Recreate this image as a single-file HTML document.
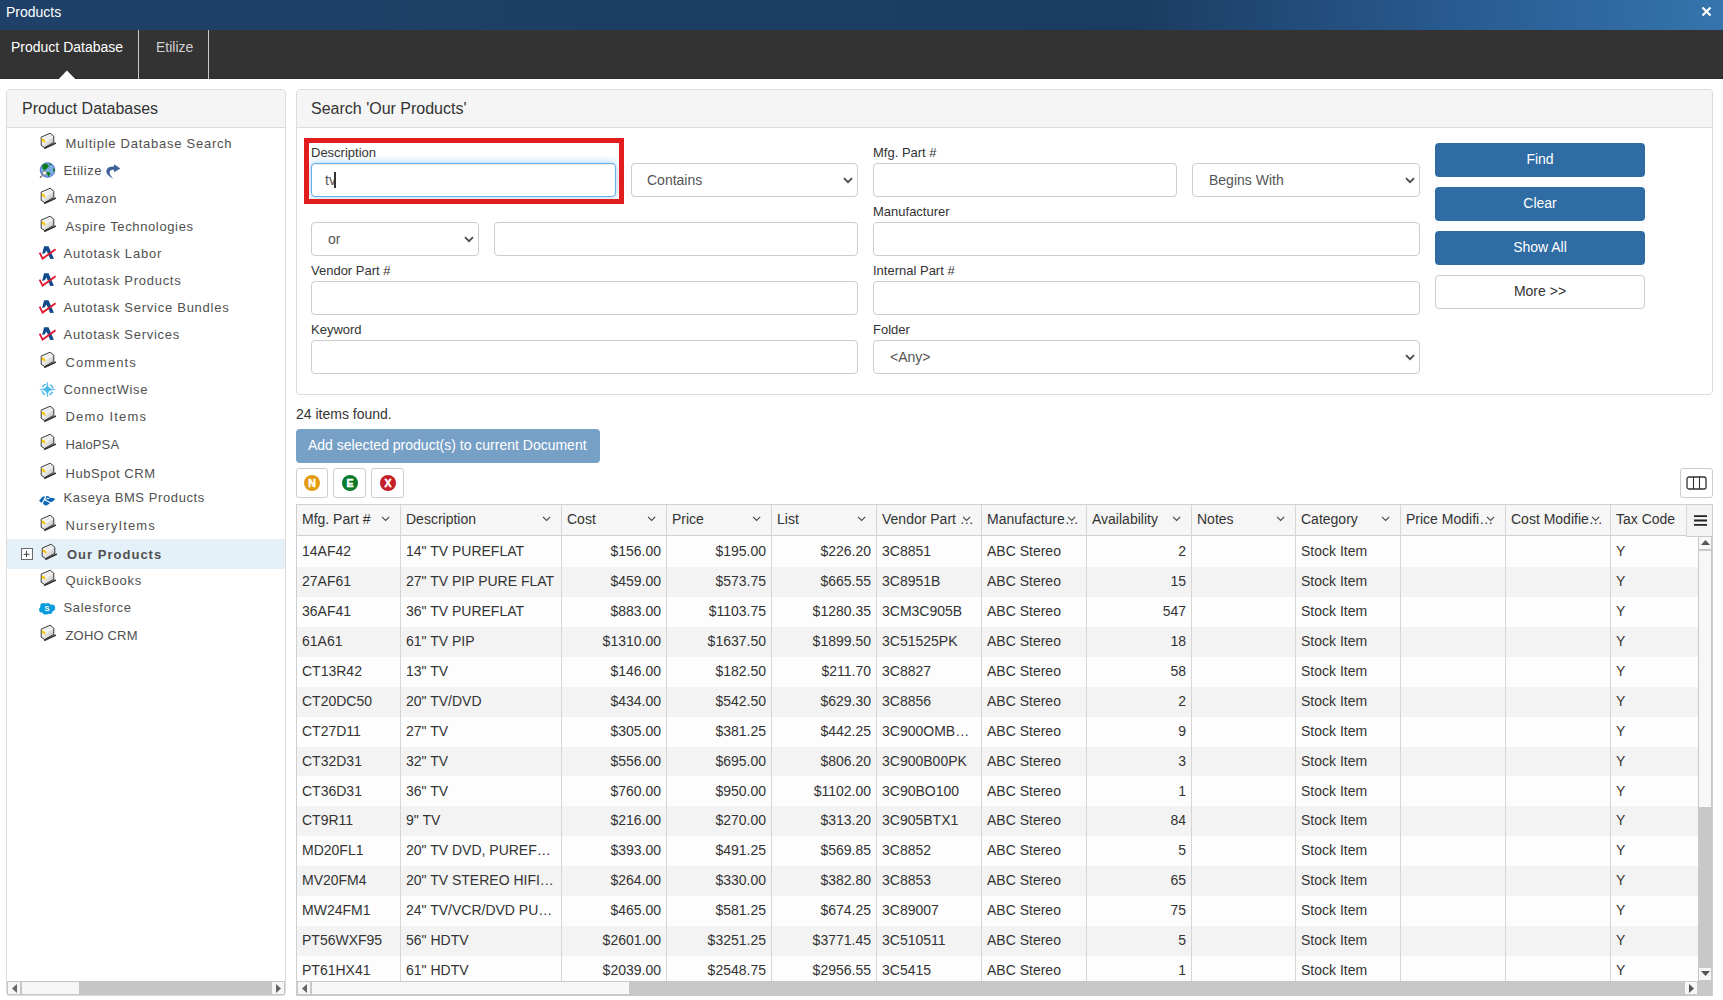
<!DOCTYPE html>
<html><head><meta charset="utf-8"><title>Products</title>
<style>
html,body{margin:0;padding:0;}
body{width:1723px;height:1000px;position:relative;overflow:hidden;background:#fff;font-family:"Liberation Sans", sans-serif;}
.t{position:absolute;white-space:nowrap;font-family:"Liberation Sans", sans-serif;}
.b{position:absolute;}
svg{display:block;}
</style></head><body>
<div class="b" style="left:0px;top:0px;width:1723px;height:30px;background:linear-gradient(90deg,#1f4169 0%,#1b3c62 66%,#285a8f 84%,#3574ad 100%)"></div><div class="t" style="left:6px;top:4.15px;font-size:14px;line-height:16px;color:#fff;">Products</div><svg class="b" style="left:1701px;top:6px" width="11" height="11" viewBox="0 0 11 11"><path d="M1.5 1.5L9.5 9.5M9.5 1.5L1.5 9.5" stroke="#fff" stroke-width="2.2"/></svg><div class="b" style="left:0px;top:30px;width:1723px;height:49px;background:#333;border-bottom:1px solid #2a2a2a;box-sizing:border-box"></div><div class="b" style="left:138px;top:30px;width:1px;height:49px;background:#c8c8c8"></div><div class="b" style="left:208px;top:30px;width:1px;height:49px;background:#c8c8c8"></div><div class="t" style="left:11px;top:39.15px;font-size:14px;line-height:16px;color:#fff;">Product Database</div><div class="t" style="left:156px;top:39.15px;font-size:14px;line-height:16px;color:#cfcfcf;">Etilize</div><svg class="b" style="left:58px;top:70px" width="18" height="9" viewBox="0 0 18 9"><path d="M0.8 9L8.9 0.6L17.2 9Z" fill="#fff"/></svg><div class="b" style="left:6px;top:89px;width:280px;height:907px;border:1px solid #dcdcdc;border-radius:4px;box-sizing:border-box;background:#fff"></div><div class="b" style="left:7px;top:90px;width:278px;height:37px;background:#f5f5f5;border-bottom:1px solid #dcdcdc;border-radius:3px 3px 0 0"></div><div class="t" style="left:22px;top:100.46px;font-size:16px;line-height:18px;color:#333;">Product Databases</div><div class="b" style="left:7px;top:539px;width:278px;height:30px;background:#e5f1f8"></div><svg class="b" style="left:21px;top:548px" width="12" height="12" viewBox="0 0 12 12"><rect x="0.5" y="0.5" width="11" height="11" fill="#fbfdfe" stroke="#6a6a6a"/><path d="M2.5 6.3H8.5M5.5 3V9" stroke="#444" stroke-width="1"/></svg><svg class="b" style="left:36px;top:128px" width="24" height="24" viewBox="36 128 24 24"><defs><linearGradient id="dbg1" x1="0" y1="0" x2="1" y2="1"><stop offset="0" stop-color="#ffffff"/><stop offset="0.5" stop-color="#e8e8e8"/><stop offset="1" stop-color="#b0b0b0"/></linearGradient></defs>
<path d="M41.2 137.1 L50.2 133.2 L53.8 136.2 L53.8 142.4 L44.6 147.6 L41.2 145.3 Z" fill="url(#dbg1)" stroke="#3a3a3a" stroke-width="1"/>
<path d="M42 138 L45.6 140 L53 136.3" fill="none" stroke="#fff" stroke-width="0.9"/>
<path d="M44.2 148.4 L55.9 142.9" stroke="#333" stroke-width="1.7"/>
<path d="M41.8 138.2 L44.6 139.4 L45.8 142.6 L44.8 142.4 L41.8 140.8 Z" fill="#f8c400"/></svg><div class="t" style="left:65.5px;top:136.00px;font-size:13px;line-height:15px;color:#505050;letter-spacing:0.745px;">Multiple Database Search</div><svg class="b" style="left:34px;top:158px" width="28" height="24" viewBox="34 158 28 24"><circle cx="47.5" cy="170" r="7.3" fill="#78ace2" stroke="#4a5fd6" stroke-width="0.9"/>
<path d="M41.9 165.2 L45.5 163.3 L48.2 164.7 L48.9 166.4 L47 168.3 L44.6 170.5 L42.6 168.8 Z" fill="#0d7a1c"/>
<path d="M49.1 163.5 L51.8 164.2 L51.3 165.2 L49.6 165 Z" fill="#0d7a1c"/>
<path d="M53.7 168.1 L54.9 169.3 L54.6 171.4 L53.2 171.4 L53 169.5 Z" fill="#0d7a1c"/>
<path d="M47.4 171.7 L49.4 172.4 L50.8 173.6 L49.4 175.3 L48.4 177.2 L47.7 175.3 L47 173.4 Z" fill="#0d7a1c"/>
<path d="M41.9 175.8 L40 177.6" stroke="#6a5a4a" stroke-width="1.3"/>
<circle cx="44.6" cy="173.1" r="2" fill="#fff" stroke="#7a6a5a" stroke-width="0.8"/></svg><div class="t" style="left:63.5px;top:163.00px;font-size:13px;line-height:15px;color:#505050;letter-spacing:0.547px;">Etilize</div><svg class="b" style="left:100px;top:158px" width="26" height="24" viewBox="100 158 26 24"><path d="M113.5 178.8 Q106 175 106.3 171 Q107 166.5 114 166.6 L114 164.3 L120.4 168.5 L114 172.2 L114 169.9 Q110 169.6 109.6 172.2 Q109.6 175.2 113.5 178.8 Z" fill="#3e6198"/></svg><svg class="b" style="left:36px;top:183px" width="24" height="24" viewBox="36 128 24 24"><defs><linearGradient id="dbg4" x1="0" y1="0" x2="1" y2="1"><stop offset="0" stop-color="#ffffff"/><stop offset="0.5" stop-color="#e8e8e8"/><stop offset="1" stop-color="#b0b0b0"/></linearGradient></defs>
<path d="M41.2 137.1 L50.2 133.2 L53.8 136.2 L53.8 142.4 L44.6 147.6 L41.2 145.3 Z" fill="url(#dbg4)" stroke="#3a3a3a" stroke-width="1"/>
<path d="M42 138 L45.6 140 L53 136.3" fill="none" stroke="#fff" stroke-width="0.9"/>
<path d="M44.2 148.4 L55.9 142.9" stroke="#333" stroke-width="1.7"/>
<path d="M41.8 138.2 L44.6 139.4 L45.8 142.6 L44.8 142.4 L41.8 140.8 Z" fill="#f8c400"/></svg><div class="t" style="left:65.5px;top:191.00px;font-size:13px;line-height:15px;color:#505050;letter-spacing:0.66px;">Amazon</div><svg class="b" style="left:36px;top:211px" width="24" height="24" viewBox="36 128 24 24"><defs><linearGradient id="dbg5" x1="0" y1="0" x2="1" y2="1"><stop offset="0" stop-color="#ffffff"/><stop offset="0.5" stop-color="#e8e8e8"/><stop offset="1" stop-color="#b0b0b0"/></linearGradient></defs>
<path d="M41.2 137.1 L50.2 133.2 L53.8 136.2 L53.8 142.4 L44.6 147.6 L41.2 145.3 Z" fill="url(#dbg5)" stroke="#3a3a3a" stroke-width="1"/>
<path d="M42 138 L45.6 140 L53 136.3" fill="none" stroke="#fff" stroke-width="0.9"/>
<path d="M44.2 148.4 L55.9 142.9" stroke="#333" stroke-width="1.7"/>
<path d="M41.8 138.2 L44.6 139.4 L45.8 142.6 L44.8 142.4 L41.8 140.8 Z" fill="#f8c400"/></svg><div class="t" style="left:65.5px;top:219.00px;font-size:13px;line-height:15px;color:#505050;letter-spacing:0.633px;">Aspire Technologies</div><svg class="b" style="left:34px;top:242px" width="26" height="22" viewBox="34 242 26 22"><path d="M44.1 246.2 L48.5 246.2 L53.9 258.8 L50.3 258.9 L46.4 250.4 L44.8 253.2 L42.1 254 Z" fill="#0f4a8a"/>
<path d="M39.6 252.6 L42.6 258.6 L55.6 249.3" fill="none" stroke="#e3162f" stroke-width="1.8" stroke-linejoin="miter"/></svg><div class="t" style="left:63.5px;top:246.00px;font-size:13px;line-height:15px;color:#505050;letter-spacing:0.797px;">Autotask Labor</div><svg class="b" style="left:34px;top:269px" width="26" height="22" viewBox="34 242 26 22"><path d="M44.1 246.2 L48.5 246.2 L53.9 258.8 L50.3 258.9 L46.4 250.4 L44.8 253.2 L42.1 254 Z" fill="#0f4a8a"/>
<path d="M39.6 252.6 L42.6 258.6 L55.6 249.3" fill="none" stroke="#e3162f" stroke-width="1.8" stroke-linejoin="miter"/></svg><div class="t" style="left:63.5px;top:273.00px;font-size:13px;line-height:15px;color:#505050;letter-spacing:0.732px;">Autotask Products</div><svg class="b" style="left:34px;top:296px" width="26" height="22" viewBox="34 242 26 22"><path d="M44.1 246.2 L48.5 246.2 L53.9 258.8 L50.3 258.9 L46.4 250.4 L44.8 253.2 L42.1 254 Z" fill="#0f4a8a"/>
<path d="M39.6 252.6 L42.6 258.6 L55.6 249.3" fill="none" stroke="#e3162f" stroke-width="1.8" stroke-linejoin="miter"/></svg><div class="t" style="left:63.5px;top:300.00px;font-size:13px;line-height:15px;color:#505050;letter-spacing:0.739px;">Autotask Service Bundles</div><svg class="b" style="left:34px;top:323px" width="26" height="22" viewBox="34 242 26 22"><path d="M44.1 246.2 L48.5 246.2 L53.9 258.8 L50.3 258.9 L46.4 250.4 L44.8 253.2 L42.1 254 Z" fill="#0f4a8a"/>
<path d="M39.6 252.6 L42.6 258.6 L55.6 249.3" fill="none" stroke="#e3162f" stroke-width="1.8" stroke-linejoin="miter"/></svg><div class="t" style="left:63.5px;top:327.00px;font-size:13px;line-height:15px;color:#505050;letter-spacing:0.73px;">Autotask Services</div><svg class="b" style="left:36px;top:347px" width="24" height="24" viewBox="36 128 24 24"><defs><linearGradient id="dbg10" x1="0" y1="0" x2="1" y2="1"><stop offset="0" stop-color="#ffffff"/><stop offset="0.5" stop-color="#e8e8e8"/><stop offset="1" stop-color="#b0b0b0"/></linearGradient></defs>
<path d="M41.2 137.1 L50.2 133.2 L53.8 136.2 L53.8 142.4 L44.6 147.6 L41.2 145.3 Z" fill="url(#dbg10)" stroke="#3a3a3a" stroke-width="1"/>
<path d="M42 138 L45.6 140 L53 136.3" fill="none" stroke="#fff" stroke-width="0.9"/>
<path d="M44.2 148.4 L55.9 142.9" stroke="#333" stroke-width="1.7"/>
<path d="M41.8 138.2 L44.6 139.4 L45.8 142.6 L44.8 142.4 L41.8 140.8 Z" fill="#f8c400"/></svg><div class="t" style="left:65.5px;top:355.00px;font-size:13px;line-height:15px;color:#505050;letter-spacing:1.043px;">Comments</div><svg class="b" style="left:34px;top:378px" width="26" height="24" viewBox="34 378 26 24"><circle cx="47.4" cy="389.5" r="5.6" fill="none" stroke="#4ab8e8" stroke-width="1.5" stroke-dasharray="4.3 4.5" stroke-dashoffset="-2.25"/>
<path d="M47.4 382 C47.7 387.4 48.6 389.1 55 389.5 C48.6 389.9 47.7 391.6 47.4 397 C47.1 391.6 46.2 389.9 39.8 389.5 C46.2 389.1 47.1 387.4 47.4 382 Z" fill="#4ab8e8" stroke="#4ab8e8" stroke-width="0.6"/></svg><div class="t" style="left:63.5px;top:382.00px;font-size:13px;line-height:15px;color:#505050;letter-spacing:0.67px;">ConnectWise</div><svg class="b" style="left:36px;top:401px" width="24" height="24" viewBox="36 128 24 24"><defs><linearGradient id="dbg12" x1="0" y1="0" x2="1" y2="1"><stop offset="0" stop-color="#ffffff"/><stop offset="0.5" stop-color="#e8e8e8"/><stop offset="1" stop-color="#b0b0b0"/></linearGradient></defs>
<path d="M41.2 137.1 L50.2 133.2 L53.8 136.2 L53.8 142.4 L44.6 147.6 L41.2 145.3 Z" fill="url(#dbg12)" stroke="#3a3a3a" stroke-width="1"/>
<path d="M42 138 L45.6 140 L53 136.3" fill="none" stroke="#fff" stroke-width="0.9"/>
<path d="M44.2 148.4 L55.9 142.9" stroke="#333" stroke-width="1.7"/>
<path d="M41.8 138.2 L44.6 139.4 L45.8 142.6 L44.8 142.4 L41.8 140.8 Z" fill="#f8c400"/></svg><div class="t" style="left:65.5px;top:409.00px;font-size:13px;line-height:15px;color:#505050;letter-spacing:1.151px;">Demo Items</div><svg class="b" style="left:36px;top:429px" width="24" height="24" viewBox="36 128 24 24"><defs><linearGradient id="dbg13" x1="0" y1="0" x2="1" y2="1"><stop offset="0" stop-color="#ffffff"/><stop offset="0.5" stop-color="#e8e8e8"/><stop offset="1" stop-color="#b0b0b0"/></linearGradient></defs>
<path d="M41.2 137.1 L50.2 133.2 L53.8 136.2 L53.8 142.4 L44.6 147.6 L41.2 145.3 Z" fill="url(#dbg13)" stroke="#3a3a3a" stroke-width="1"/>
<path d="M42 138 L45.6 140 L53 136.3" fill="none" stroke="#fff" stroke-width="0.9"/>
<path d="M44.2 148.4 L55.9 142.9" stroke="#333" stroke-width="1.7"/>
<path d="M41.8 138.2 L44.6 139.4 L45.8 142.6 L44.8 142.4 L41.8 140.8 Z" fill="#f8c400"/></svg><div class="t" style="left:65.5px;top:437.00px;font-size:13px;line-height:15px;color:#505050;letter-spacing:0.14px;">HaloPSA</div><svg class="b" style="left:36px;top:458px" width="24" height="24" viewBox="36 128 24 24"><defs><linearGradient id="dbg14" x1="0" y1="0" x2="1" y2="1"><stop offset="0" stop-color="#ffffff"/><stop offset="0.5" stop-color="#e8e8e8"/><stop offset="1" stop-color="#b0b0b0"/></linearGradient></defs>
<path d="M41.2 137.1 L50.2 133.2 L53.8 136.2 L53.8 142.4 L44.6 147.6 L41.2 145.3 Z" fill="url(#dbg14)" stroke="#3a3a3a" stroke-width="1"/>
<path d="M42 138 L45.6 140 L53 136.3" fill="none" stroke="#fff" stroke-width="0.9"/>
<path d="M44.2 148.4 L55.9 142.9" stroke="#333" stroke-width="1.7"/>
<path d="M41.8 138.2 L44.6 139.4 L45.8 142.6 L44.8 142.4 L41.8 140.8 Z" fill="#f8c400"/></svg><div class="t" style="left:65.5px;top:466.00px;font-size:13px;line-height:15px;color:#505050;letter-spacing:0.58px;">HubSpot CRM</div><svg class="b" style="left:36px;top:490px" width="24" height="20" viewBox="36 490 24 20"><path d="M39.2 500.4 L42 497.2 L44.4 496 L44.8 496.8 L43.6 499.4 L42.6 501.6 L41.4 502.8 L40 501.8 Z" fill="#1068b8"/>
<path d="M46.2 496 L48.6 496.2 L49.8 497.8 L54.6 498.2 L54.8 499.4 L53.2 501 L51.4 502.2 L49 501.4 L47.2 500.4 L45.2 498.6 L46 497.8 Z" fill="#1068b8"/>
<ellipse cx="47.9" cy="498.4" rx="1.4" ry="0.6" fill="#fff"/>
<path d="M44.4 500.2 L46.8 501.6 L48.8 502.6 L50 503.6 L48 504.6 L46.4 505.8 L44 504.8 L43 503.6 L43.6 502 Z" fill="#1068b8"/></svg><div class="t" style="left:63.5px;top:490.00px;font-size:13px;line-height:15px;color:#505050;letter-spacing:0.594px;">Kaseya BMS Products</div><svg class="b" style="left:36px;top:510px" width="24" height="24" viewBox="36 128 24 24"><defs><linearGradient id="dbg16" x1="0" y1="0" x2="1" y2="1"><stop offset="0" stop-color="#ffffff"/><stop offset="0.5" stop-color="#e8e8e8"/><stop offset="1" stop-color="#b0b0b0"/></linearGradient></defs>
<path d="M41.2 137.1 L50.2 133.2 L53.8 136.2 L53.8 142.4 L44.6 147.6 L41.2 145.3 Z" fill="url(#dbg16)" stroke="#3a3a3a" stroke-width="1"/>
<path d="M42 138 L45.6 140 L53 136.3" fill="none" stroke="#fff" stroke-width="0.9"/>
<path d="M44.2 148.4 L55.9 142.9" stroke="#333" stroke-width="1.7"/>
<path d="M41.8 138.2 L44.6 139.4 L45.8 142.6 L44.8 142.4 L41.8 140.8 Z" fill="#f8c400"/></svg><div class="t" style="left:65.5px;top:518.00px;font-size:13px;line-height:15px;color:#505050;letter-spacing:1.084px;">NurseryItems</div><svg class="b" style="left:37px;top:539px" width="24" height="24" viewBox="36 128 24 24"><defs><linearGradient id="dbg17" x1="0" y1="0" x2="1" y2="1"><stop offset="0" stop-color="#ffffff"/><stop offset="0.5" stop-color="#e8e8e8"/><stop offset="1" stop-color="#b0b0b0"/></linearGradient></defs>
<path d="M41.2 137.1 L50.2 133.2 L53.8 136.2 L53.8 142.4 L44.6 147.6 L41.2 145.3 Z" fill="url(#dbg17)" stroke="#3a3a3a" stroke-width="1"/>
<path d="M42 138 L45.6 140 L53 136.3" fill="none" stroke="#fff" stroke-width="0.9"/>
<path d="M44.2 148.4 L55.9 142.9" stroke="#333" stroke-width="1.7"/>
<path d="M41.8 138.2 L44.6 139.4 L45.8 142.6 L44.8 142.4 L41.8 140.8 Z" fill="#f8c400"/></svg><div class="t" style="left:67.0px;top:547.00px;font-size:13px;line-height:15px;color:#505050;letter-spacing:1.011px;font-weight:bold;">Our Products</div><svg class="b" style="left:36px;top:565px" width="24" height="24" viewBox="36 128 24 24"><defs><linearGradient id="dbg18" x1="0" y1="0" x2="1" y2="1"><stop offset="0" stop-color="#ffffff"/><stop offset="0.5" stop-color="#e8e8e8"/><stop offset="1" stop-color="#b0b0b0"/></linearGradient></defs>
<path d="M41.2 137.1 L50.2 133.2 L53.8 136.2 L53.8 142.4 L44.6 147.6 L41.2 145.3 Z" fill="url(#dbg18)" stroke="#3a3a3a" stroke-width="1"/>
<path d="M42 138 L45.6 140 L53 136.3" fill="none" stroke="#fff" stroke-width="0.9"/>
<path d="M44.2 148.4 L55.9 142.9" stroke="#333" stroke-width="1.7"/>
<path d="M41.8 138.2 L44.6 139.4 L45.8 142.6 L44.8 142.4 L41.8 140.8 Z" fill="#f8c400"/></svg><div class="t" style="left:65.5px;top:573.00px;font-size:13px;line-height:15px;color:#505050;letter-spacing:0.709px;">QuickBooks</div><svg class="b" style="left:34px;top:596px" width="26" height="24" viewBox="34 596 26 24"><g fill="#0a9ddd"><circle cx="43.5" cy="606.2" r="3.2"/><circle cx="47.8" cy="605.5" r="2.6"/><circle cx="51.8" cy="607.9" r="3.3"/><circle cx="41.9" cy="609.8" r="2.8"/><circle cx="45.6" cy="611.4" r="3.2"/><circle cx="49.6" cy="610.9" r="3"/><rect x="42" y="606" width="10" height="6"/></g>
<text x="47.1" y="611.3" font-family="Liberation Sans" font-size="7.5" font-weight="bold" fill="#fff" text-anchor="middle">S</text></svg><div class="t" style="left:63.5px;top:600.00px;font-size:13px;line-height:15px;color:#505050;letter-spacing:0.667px;">Salesforce</div><svg class="b" style="left:36px;top:620px" width="24" height="24" viewBox="36 128 24 24"><defs><linearGradient id="dbg20" x1="0" y1="0" x2="1" y2="1"><stop offset="0" stop-color="#ffffff"/><stop offset="0.5" stop-color="#e8e8e8"/><stop offset="1" stop-color="#b0b0b0"/></linearGradient></defs>
<path d="M41.2 137.1 L50.2 133.2 L53.8 136.2 L53.8 142.4 L44.6 147.6 L41.2 145.3 Z" fill="url(#dbg20)" stroke="#3a3a3a" stroke-width="1"/>
<path d="M42 138 L45.6 140 L53 136.3" fill="none" stroke="#fff" stroke-width="0.9"/>
<path d="M44.2 148.4 L55.9 142.9" stroke="#333" stroke-width="1.7"/>
<path d="M41.8 138.2 L44.6 139.4 L45.8 142.6 L44.8 142.4 L41.8 140.8 Z" fill="#f8c400"/></svg><div class="t" style="left:65.5px;top:628.00px;font-size:13px;line-height:15px;color:#505050;letter-spacing:0.177px;">ZOHO CRM</div><div class="b" style="left:7px;top:981px;width:278px;height:14px;background:#c6c6c6"></div><div class="b" style="left:8px;top:982px;width:12px;height:12px;background:#f6f6f6"></div><div class="b" style="left:22px;top:982px;width:57px;height:12px;background:#f6f6f6"></div><div class="b" style="left:272px;top:982px;width:12px;height:12px;background:#f6f6f6"></div><svg class="b" style="left:12px;top:984px" width="5" height="9"><path d="M5 0L0 4.5L5 9Z" fill="#666"/></svg><svg class="b" style="left:276px;top:984px" width="5" height="9"><path d="M0 0L5 4.5L0 9Z" fill="#666"/></svg><div class="b" style="left:296px;top:89px;width:1417px;height:306px;border:1px solid #dcdcdc;border-radius:4px;box-sizing:border-box;background:#fff"></div><div class="b" style="left:297px;top:90px;width:1415px;height:37px;background:#f5f5f5;border-bottom:1px solid #dcdcdc;border-radius:3px 3px 0 0"></div><div class="t" style="left:311px;top:100.46px;font-size:16px;line-height:18px;color:#333;">Search 'Our Products'</div><div class="t" style="left:311px;top:145.00px;font-size:13px;line-height:15px;color:#333;">Description</div><div class="b" style="left:311px;top:163px;width:305px;height:34px;border:1px solid #66afe9;border-radius:4px;box-sizing:border-box;background:#fff;box-shadow:inset 0 1px 1px rgba(0,0,0,.075),0 0 8px rgba(102,175,233,.6);"></div><div class="t" style="left:325px;top:172.15px;font-size:14px;line-height:16px;color:#555;">tv</div><div class="b" style="left:334px;top:172px;width:2px;height:16px;background:#333"></div><div class="b" style="left:304px;top:138px;width:320px;height:66px;border:5px solid #e21d1d;box-sizing:border-box"></div><div class="b" style="left:631px;top:163px;width:227px;height:34px;border:1px solid #ccc;border-radius:4px;box-sizing:border-box;background:#fff;"></div><div class="t" style="left:647px;top:172.15px;font-size:14px;line-height:16px;color:#555;">Contains</div><div class="b" style="left:843px;top:177px;line-height:0"><svg width="10" height="7" viewBox="0 0 10 7"><path d="M1 1.2L5 5.2L9 1.2" fill="none" stroke="#4a4a4a" stroke-width="1.8"/></svg></div><div class="b" style="left:311px;top:222px;width:168px;height:34px;border:1px solid #ccc;border-radius:4px;box-sizing:border-box;background:#fff;"></div><div class="t" style="left:328px;top:231.15px;font-size:14px;line-height:16px;color:#555;">or</div><div class="b" style="left:464px;top:236px;line-height:0"><svg width="10" height="7" viewBox="0 0 10 7"><path d="M1 1.2L5 5.2L9 1.2" fill="none" stroke="#4a4a4a" stroke-width="1.8"/></svg></div><div class="b" style="left:494px;top:222px;width:364px;height:34px;border:1px solid #ccc;border-radius:4px;box-sizing:border-box;background:#fff;"></div><div class="t" style="left:311px;top:263.00px;font-size:13px;line-height:15px;color:#333;">Vendor Part #</div><div class="b" style="left:311px;top:281px;width:547px;height:34px;border:1px solid #ccc;border-radius:4px;box-sizing:border-box;background:#fff;"></div><div class="t" style="left:311px;top:322.00px;font-size:13px;line-height:15px;color:#333;">Keyword</div><div class="b" style="left:311px;top:340px;width:547px;height:34px;border:1px solid #ccc;border-radius:4px;box-sizing:border-box;background:#fff;"></div><div class="t" style="left:873px;top:145.00px;font-size:13px;line-height:15px;color:#333;">Mfg. Part #</div><div class="b" style="left:873px;top:163px;width:304px;height:34px;border:1px solid #ccc;border-radius:4px;box-sizing:border-box;background:#fff;"></div><div class="b" style="left:1192px;top:163px;width:228px;height:34px;border:1px solid #ccc;border-radius:4px;box-sizing:border-box;background:#fff;"></div><div class="t" style="left:1209px;top:172.15px;font-size:14px;line-height:16px;color:#555;">Begins With</div><div class="b" style="left:1405px;top:177px;line-height:0"><svg width="10" height="7" viewBox="0 0 10 7"><path d="M1 1.2L5 5.2L9 1.2" fill="none" stroke="#4a4a4a" stroke-width="1.8"/></svg></div><div class="t" style="left:873px;top:204.00px;font-size:13px;line-height:15px;color:#333;">Manufacturer</div><div class="b" style="left:873px;top:222px;width:547px;height:34px;border:1px solid #ccc;border-radius:4px;box-sizing:border-box;background:#fff;"></div><div class="t" style="left:873px;top:263.00px;font-size:13px;line-height:15px;color:#333;">Internal Part #</div><div class="b" style="left:873px;top:281px;width:547px;height:34px;border:1px solid #ccc;border-radius:4px;box-sizing:border-box;background:#fff;"></div><div class="t" style="left:873px;top:322.00px;font-size:13px;line-height:15px;color:#333;">Folder</div><div class="b" style="left:873px;top:340px;width:547px;height:34px;border:1px solid #ccc;border-radius:4px;box-sizing:border-box;background:#fff;"></div><div class="t" style="left:890px;top:349.15px;font-size:14px;line-height:16px;color:#555;">&lt;Any&gt;</div><div class="b" style="left:1405px;top:354px;line-height:0"><svg width="10" height="7" viewBox="0 0 10 7"><path d="M1 1.2L5 5.2L9 1.2" fill="none" stroke="#4a4a4a" stroke-width="1.8"/></svg></div><div class="b" style="left:1435px;top:143px;width:210px;height:34px;background:#2f6ca4;border-radius:4px;"></div><div class="t" style="left:1435px;top:151.15px;width:210px;text-align:center;font-size:14px;line-height:16px;color:#fff">Find</div><div class="b" style="left:1435px;top:187px;width:210px;height:34px;background:#2f6ca4;border-radius:4px;"></div><div class="t" style="left:1435px;top:195.15px;width:210px;text-align:center;font-size:14px;line-height:16px;color:#fff">Clear</div><div class="b" style="left:1435px;top:231px;width:210px;height:34px;background:#2f6ca4;border-radius:4px;"></div><div class="t" style="left:1435px;top:239.15px;width:210px;text-align:center;font-size:14px;line-height:16px;color:#fff">Show All</div><div class="b" style="left:1435px;top:275px;width:210px;height:34px;background:#fff;border:1px solid #ccc;border-radius:4px;box-sizing:border-box;"></div><div class="t" style="left:1435px;top:283.15px;width:210px;text-align:center;font-size:14px;line-height:16px;color:#333">More &gt;&gt;</div><div class="t" style="left:296px;top:406.15px;font-size:14px;line-height:16px;color:#333;">24 items found.</div><div class="b" style="left:296px;top:429px;width:304px;height:34px;background:#77a0c6;border-radius:4px"></div><div class="t" style="left:308px;top:437.15px;font-size:14px;line-height:16px;color:#fff;">Add selected product(s) to current Document</div><div class="b" style="left:296px;top:468px;width:32px;height:30px;background:#fff;border:1px solid #ccc;border-radius:3px;box-sizing:border-box"></div><svg class="b" style="left:304.0px;top:475px" width="16" height="16" viewBox="0 0 16 16"><circle cx="8" cy="8" r="8" fill="#e39b12"/><text x="8" y="12" font-family="Liberation Sans" font-size="10.5" font-weight="bold" fill="#fff" stroke="#fff" stroke-width="0.5" text-anchor="middle">N</text></svg><div class="b" style="left:333px;top:468px;width:33px;height:30px;background:#fff;border:1px solid #ccc;border-radius:3px;box-sizing:border-box"></div><svg class="b" style="left:341.5px;top:475px" width="16" height="16" viewBox="0 0 16 16"><circle cx="8" cy="8" r="8" fill="#0b7a2a"/><text x="8" y="12" font-family="Liberation Sans" font-size="10.5" font-weight="bold" fill="#fff" stroke="#fff" stroke-width="0.5" text-anchor="middle">E</text></svg><div class="b" style="left:371px;top:468px;width:33px;height:30px;background:#fff;border:1px solid #ccc;border-radius:3px;box-sizing:border-box"></div><svg class="b" style="left:379.5px;top:475px" width="16" height="16" viewBox="0 0 16 16"><circle cx="8" cy="8" r="8" fill="#c51f2a"/><text x="8" y="12" font-family="Liberation Sans" font-size="10.5" font-weight="bold" fill="#fff" stroke="#fff" stroke-width="0.5" text-anchor="middle">X</text></svg><div class="b" style="left:1680px;top:468px;width:33px;height:30px;background:#fff;border:1px solid #ccc;border-radius:3px;box-sizing:border-box"></div><svg class="b" style="left:1686px;top:476px" width="21" height="14" viewBox="0 0 21 14"><rect x="1" y="1" width="19" height="12" rx="2" fill="none" stroke="#333" stroke-width="1.3"/><path d="M7.5 1V13M13.5 1V13" stroke="#333" stroke-width="1.1"/></svg><div class="b" style="left:296px;top:504px;width:1417px;height:492px;border:1px solid #cfcfcf;box-sizing:border-box;background:#fff"></div><div class="b" style="left:297px;top:505px;width:1415px;height:31px;background:#f6f6f6;border-bottom:1px solid #cfcfcf;box-sizing:border-box"></div><div class="b" style="left:297px;top:536px;width:1401px;height:445px;overflow:hidden"><div class="b" style="left:0;top:0px;width:1401px;height:31px;background:#fdfdfd"></div><div class="b" style="left:0;top:31px;width:1401px;height:30px;background:#f3f3f3"></div><div class="b" style="left:0;top:61px;width:1401px;height:30px;background:#fdfdfd"></div><div class="b" style="left:0;top:91px;width:1401px;height:30px;background:#f3f3f3"></div><div class="b" style="left:0;top:121px;width:1401px;height:30px;background:#fdfdfd"></div><div class="b" style="left:0;top:151px;width:1401px;height:30px;background:#f3f3f3"></div><div class="b" style="left:0;top:181px;width:1401px;height:30px;background:#fdfdfd"></div><div class="b" style="left:0;top:211px;width:1401px;height:29px;background:#f3f3f3"></div><div class="b" style="left:0;top:240px;width:1401px;height:30px;background:#fdfdfd"></div><div class="b" style="left:0;top:270px;width:1401px;height:30px;background:#f3f3f3"></div><div class="b" style="left:0;top:300px;width:1401px;height:30px;background:#fdfdfd"></div><div class="b" style="left:0;top:330px;width:1401px;height:30px;background:#f3f3f3"></div><div class="b" style="left:0;top:360px;width:1401px;height:30px;background:#fdfdfd"></div><div class="b" style="left:0;top:390px;width:1401px;height:30px;background:#f3f3f3"></div><div class="b" style="left:0;top:420px;width:1401px;height:30px;background:#fdfdfd"></div><div class="t" style="left:5px;top:7.15px;font-size:14px;line-height:16px;color:#333">14AF42</div><div class="t" style="left:109px;top:7.15px;font-size:14px;line-height:16px;color:#333">14" TV PUREFLAT</div><div class="t" style="left:264px;width:100px;text-align:right;top:7.15px;font-size:14px;line-height:16px;color:#333">$156.00</div><div class="t" style="left:369px;width:100px;text-align:right;top:7.15px;font-size:14px;line-height:16px;color:#333">$195.00</div><div class="t" style="left:474px;width:100px;text-align:right;top:7.15px;font-size:14px;line-height:16px;color:#333">$226.20</div><div class="t" style="left:585px;top:7.15px;font-size:14px;line-height:16px;color:#333">3C8851</div><div class="t" style="left:690px;top:7.15px;font-size:14px;line-height:16px;color:#333">ABC Stereo</div><div class="t" style="left:789px;width:100px;text-align:right;top:7.15px;font-size:14px;line-height:16px;color:#333">2</div><div class="t" style="left:1004px;top:7.15px;font-size:14px;line-height:16px;color:#333">Stock Item</div><div class="t" style="left:1319px;top:7.15px;font-size:14px;line-height:16px;color:#333">Y</div><div class="t" style="left:5px;top:37.15px;font-size:14px;line-height:16px;color:#333">27AF61</div><div class="t" style="left:109px;top:37.15px;font-size:14px;line-height:16px;color:#333">27" TV PIP PURE FLAT</div><div class="t" style="left:264px;width:100px;text-align:right;top:37.15px;font-size:14px;line-height:16px;color:#333">$459.00</div><div class="t" style="left:369px;width:100px;text-align:right;top:37.15px;font-size:14px;line-height:16px;color:#333">$573.75</div><div class="t" style="left:474px;width:100px;text-align:right;top:37.15px;font-size:14px;line-height:16px;color:#333">$665.55</div><div class="t" style="left:585px;top:37.15px;font-size:14px;line-height:16px;color:#333">3C8951B</div><div class="t" style="left:690px;top:37.15px;font-size:14px;line-height:16px;color:#333">ABC Stereo</div><div class="t" style="left:789px;width:100px;text-align:right;top:37.15px;font-size:14px;line-height:16px;color:#333">15</div><div class="t" style="left:1004px;top:37.15px;font-size:14px;line-height:16px;color:#333">Stock Item</div><div class="t" style="left:1319px;top:37.15px;font-size:14px;line-height:16px;color:#333">Y</div><div class="t" style="left:5px;top:67.15px;font-size:14px;line-height:16px;color:#333">36AF41</div><div class="t" style="left:109px;top:67.15px;font-size:14px;line-height:16px;color:#333">36" TV PUREFLAT</div><div class="t" style="left:264px;width:100px;text-align:right;top:67.15px;font-size:14px;line-height:16px;color:#333">$883.00</div><div class="t" style="left:369px;width:100px;text-align:right;top:67.15px;font-size:14px;line-height:16px;color:#333">$1103.75</div><div class="t" style="left:474px;width:100px;text-align:right;top:67.15px;font-size:14px;line-height:16px;color:#333">$1280.35</div><div class="t" style="left:585px;top:67.15px;font-size:14px;line-height:16px;color:#333">3CM3C905B</div><div class="t" style="left:690px;top:67.15px;font-size:14px;line-height:16px;color:#333">ABC Stereo</div><div class="t" style="left:789px;width:100px;text-align:right;top:67.15px;font-size:14px;line-height:16px;color:#333">547</div><div class="t" style="left:1004px;top:67.15px;font-size:14px;line-height:16px;color:#333">Stock Item</div><div class="t" style="left:1319px;top:67.15px;font-size:14px;line-height:16px;color:#333">Y</div><div class="t" style="left:5px;top:97.15px;font-size:14px;line-height:16px;color:#333">61A61</div><div class="t" style="left:109px;top:97.15px;font-size:14px;line-height:16px;color:#333">61" TV PIP</div><div class="t" style="left:264px;width:100px;text-align:right;top:97.15px;font-size:14px;line-height:16px;color:#333">$1310.00</div><div class="t" style="left:369px;width:100px;text-align:right;top:97.15px;font-size:14px;line-height:16px;color:#333">$1637.50</div><div class="t" style="left:474px;width:100px;text-align:right;top:97.15px;font-size:14px;line-height:16px;color:#333">$1899.50</div><div class="t" style="left:585px;top:97.15px;font-size:14px;line-height:16px;color:#333">3C51525PK</div><div class="t" style="left:690px;top:97.15px;font-size:14px;line-height:16px;color:#333">ABC Stereo</div><div class="t" style="left:789px;width:100px;text-align:right;top:97.15px;font-size:14px;line-height:16px;color:#333">18</div><div class="t" style="left:1004px;top:97.15px;font-size:14px;line-height:16px;color:#333">Stock Item</div><div class="t" style="left:1319px;top:97.15px;font-size:14px;line-height:16px;color:#333">Y</div><div class="t" style="left:5px;top:127.15px;font-size:14px;line-height:16px;color:#333">CT13R42</div><div class="t" style="left:109px;top:127.15px;font-size:14px;line-height:16px;color:#333">13" TV</div><div class="t" style="left:264px;width:100px;text-align:right;top:127.15px;font-size:14px;line-height:16px;color:#333">$146.00</div><div class="t" style="left:369px;width:100px;text-align:right;top:127.15px;font-size:14px;line-height:16px;color:#333">$182.50</div><div class="t" style="left:474px;width:100px;text-align:right;top:127.15px;font-size:14px;line-height:16px;color:#333">$211.70</div><div class="t" style="left:585px;top:127.15px;font-size:14px;line-height:16px;color:#333">3C8827</div><div class="t" style="left:690px;top:127.15px;font-size:14px;line-height:16px;color:#333">ABC Stereo</div><div class="t" style="left:789px;width:100px;text-align:right;top:127.15px;font-size:14px;line-height:16px;color:#333">58</div><div class="t" style="left:1004px;top:127.15px;font-size:14px;line-height:16px;color:#333">Stock Item</div><div class="t" style="left:1319px;top:127.15px;font-size:14px;line-height:16px;color:#333">Y</div><div class="t" style="left:5px;top:157.15px;font-size:14px;line-height:16px;color:#333">CT20DC50</div><div class="t" style="left:109px;top:157.15px;font-size:14px;line-height:16px;color:#333">20" TV/DVD</div><div class="t" style="left:264px;width:100px;text-align:right;top:157.15px;font-size:14px;line-height:16px;color:#333">$434.00</div><div class="t" style="left:369px;width:100px;text-align:right;top:157.15px;font-size:14px;line-height:16px;color:#333">$542.50</div><div class="t" style="left:474px;width:100px;text-align:right;top:157.15px;font-size:14px;line-height:16px;color:#333">$629.30</div><div class="t" style="left:585px;top:157.15px;font-size:14px;line-height:16px;color:#333">3C8856</div><div class="t" style="left:690px;top:157.15px;font-size:14px;line-height:16px;color:#333">ABC Stereo</div><div class="t" style="left:789px;width:100px;text-align:right;top:157.15px;font-size:14px;line-height:16px;color:#333">2</div><div class="t" style="left:1004px;top:157.15px;font-size:14px;line-height:16px;color:#333">Stock Item</div><div class="t" style="left:1319px;top:157.15px;font-size:14px;line-height:16px;color:#333">Y</div><div class="t" style="left:5px;top:187.15px;font-size:14px;line-height:16px;color:#333">CT27D11</div><div class="t" style="left:109px;top:187.15px;font-size:14px;line-height:16px;color:#333">27" TV</div><div class="t" style="left:264px;width:100px;text-align:right;top:187.15px;font-size:14px;line-height:16px;color:#333">$305.00</div><div class="t" style="left:369px;width:100px;text-align:right;top:187.15px;font-size:14px;line-height:16px;color:#333">$381.25</div><div class="t" style="left:474px;width:100px;text-align:right;top:187.15px;font-size:14px;line-height:16px;color:#333">$442.25</div><div class="t" style="left:585px;top:187.15px;font-size:14px;line-height:16px;color:#333">3C900OMB…</div><div class="t" style="left:690px;top:187.15px;font-size:14px;line-height:16px;color:#333">ABC Stereo</div><div class="t" style="left:789px;width:100px;text-align:right;top:187.15px;font-size:14px;line-height:16px;color:#333">9</div><div class="t" style="left:1004px;top:187.15px;font-size:14px;line-height:16px;color:#333">Stock Item</div><div class="t" style="left:1319px;top:187.15px;font-size:14px;line-height:16px;color:#333">Y</div><div class="t" style="left:5px;top:217.15px;font-size:14px;line-height:16px;color:#333">CT32D31</div><div class="t" style="left:109px;top:217.15px;font-size:14px;line-height:16px;color:#333">32" TV</div><div class="t" style="left:264px;width:100px;text-align:right;top:217.15px;font-size:14px;line-height:16px;color:#333">$556.00</div><div class="t" style="left:369px;width:100px;text-align:right;top:217.15px;font-size:14px;line-height:16px;color:#333">$695.00</div><div class="t" style="left:474px;width:100px;text-align:right;top:217.15px;font-size:14px;line-height:16px;color:#333">$806.20</div><div class="t" style="left:585px;top:217.15px;font-size:14px;line-height:16px;color:#333">3C900B00PK</div><div class="t" style="left:690px;top:217.15px;font-size:14px;line-height:16px;color:#333">ABC Stereo</div><div class="t" style="left:789px;width:100px;text-align:right;top:217.15px;font-size:14px;line-height:16px;color:#333">3</div><div class="t" style="left:1004px;top:217.15px;font-size:14px;line-height:16px;color:#333">Stock Item</div><div class="t" style="left:1319px;top:217.15px;font-size:14px;line-height:16px;color:#333">Y</div><div class="t" style="left:5px;top:247.15px;font-size:14px;line-height:16px;color:#333">CT36D31</div><div class="t" style="left:109px;top:247.15px;font-size:14px;line-height:16px;color:#333">36" TV</div><div class="t" style="left:264px;width:100px;text-align:right;top:247.15px;font-size:14px;line-height:16px;color:#333">$760.00</div><div class="t" style="left:369px;width:100px;text-align:right;top:247.15px;font-size:14px;line-height:16px;color:#333">$950.00</div><div class="t" style="left:474px;width:100px;text-align:right;top:247.15px;font-size:14px;line-height:16px;color:#333">$1102.00</div><div class="t" style="left:585px;top:247.15px;font-size:14px;line-height:16px;color:#333">3C90BO100</div><div class="t" style="left:690px;top:247.15px;font-size:14px;line-height:16px;color:#333">ABC Stereo</div><div class="t" style="left:789px;width:100px;text-align:right;top:247.15px;font-size:14px;line-height:16px;color:#333">1</div><div class="t" style="left:1004px;top:247.15px;font-size:14px;line-height:16px;color:#333">Stock Item</div><div class="t" style="left:1319px;top:247.15px;font-size:14px;line-height:16px;color:#333">Y</div><div class="t" style="left:5px;top:276.15px;font-size:14px;line-height:16px;color:#333">CT9R11</div><div class="t" style="left:109px;top:276.15px;font-size:14px;line-height:16px;color:#333">9" TV</div><div class="t" style="left:264px;width:100px;text-align:right;top:276.15px;font-size:14px;line-height:16px;color:#333">$216.00</div><div class="t" style="left:369px;width:100px;text-align:right;top:276.15px;font-size:14px;line-height:16px;color:#333">$270.00</div><div class="t" style="left:474px;width:100px;text-align:right;top:276.15px;font-size:14px;line-height:16px;color:#333">$313.20</div><div class="t" style="left:585px;top:276.15px;font-size:14px;line-height:16px;color:#333">3C905BTX1</div><div class="t" style="left:690px;top:276.15px;font-size:14px;line-height:16px;color:#333">ABC Stereo</div><div class="t" style="left:789px;width:100px;text-align:right;top:276.15px;font-size:14px;line-height:16px;color:#333">84</div><div class="t" style="left:1004px;top:276.15px;font-size:14px;line-height:16px;color:#333">Stock Item</div><div class="t" style="left:1319px;top:276.15px;font-size:14px;line-height:16px;color:#333">Y</div><div class="t" style="left:5px;top:306.15px;font-size:14px;line-height:16px;color:#333">MD20FL1</div><div class="t" style="left:109px;top:306.15px;font-size:14px;line-height:16px;color:#333">20" TV DVD, PUREF…</div><div class="t" style="left:264px;width:100px;text-align:right;top:306.15px;font-size:14px;line-height:16px;color:#333">$393.00</div><div class="t" style="left:369px;width:100px;text-align:right;top:306.15px;font-size:14px;line-height:16px;color:#333">$491.25</div><div class="t" style="left:474px;width:100px;text-align:right;top:306.15px;font-size:14px;line-height:16px;color:#333">$569.85</div><div class="t" style="left:585px;top:306.15px;font-size:14px;line-height:16px;color:#333">3C8852</div><div class="t" style="left:690px;top:306.15px;font-size:14px;line-height:16px;color:#333">ABC Stereo</div><div class="t" style="left:789px;width:100px;text-align:right;top:306.15px;font-size:14px;line-height:16px;color:#333">5</div><div class="t" style="left:1004px;top:306.15px;font-size:14px;line-height:16px;color:#333">Stock Item</div><div class="t" style="left:1319px;top:306.15px;font-size:14px;line-height:16px;color:#333">Y</div><div class="t" style="left:5px;top:336.15px;font-size:14px;line-height:16px;color:#333">MV20FM4</div><div class="t" style="left:109px;top:336.15px;font-size:14px;line-height:16px;color:#333">20" TV STEREO HIFI…</div><div class="t" style="left:264px;width:100px;text-align:right;top:336.15px;font-size:14px;line-height:16px;color:#333">$264.00</div><div class="t" style="left:369px;width:100px;text-align:right;top:336.15px;font-size:14px;line-height:16px;color:#333">$330.00</div><div class="t" style="left:474px;width:100px;text-align:right;top:336.15px;font-size:14px;line-height:16px;color:#333">$382.80</div><div class="t" style="left:585px;top:336.15px;font-size:14px;line-height:16px;color:#333">3C8853</div><div class="t" style="left:690px;top:336.15px;font-size:14px;line-height:16px;color:#333">ABC Stereo</div><div class="t" style="left:789px;width:100px;text-align:right;top:336.15px;font-size:14px;line-height:16px;color:#333">65</div><div class="t" style="left:1004px;top:336.15px;font-size:14px;line-height:16px;color:#333">Stock Item</div><div class="t" style="left:1319px;top:336.15px;font-size:14px;line-height:16px;color:#333">Y</div><div class="t" style="left:5px;top:366.15px;font-size:14px;line-height:16px;color:#333">MW24FM1</div><div class="t" style="left:109px;top:366.15px;font-size:14px;line-height:16px;color:#333">24" TV/VCR/DVD PU…</div><div class="t" style="left:264px;width:100px;text-align:right;top:366.15px;font-size:14px;line-height:16px;color:#333">$465.00</div><div class="t" style="left:369px;width:100px;text-align:right;top:366.15px;font-size:14px;line-height:16px;color:#333">$581.25</div><div class="t" style="left:474px;width:100px;text-align:right;top:366.15px;font-size:14px;line-height:16px;color:#333">$674.25</div><div class="t" style="left:585px;top:366.15px;font-size:14px;line-height:16px;color:#333">3C89007</div><div class="t" style="left:690px;top:366.15px;font-size:14px;line-height:16px;color:#333">ABC Stereo</div><div class="t" style="left:789px;width:100px;text-align:right;top:366.15px;font-size:14px;line-height:16px;color:#333">75</div><div class="t" style="left:1004px;top:366.15px;font-size:14px;line-height:16px;color:#333">Stock Item</div><div class="t" style="left:1319px;top:366.15px;font-size:14px;line-height:16px;color:#333">Y</div><div class="t" style="left:5px;top:396.15px;font-size:14px;line-height:16px;color:#333">PT56WXF95</div><div class="t" style="left:109px;top:396.15px;font-size:14px;line-height:16px;color:#333">56" HDTV</div><div class="t" style="left:264px;width:100px;text-align:right;top:396.15px;font-size:14px;line-height:16px;color:#333">$2601.00</div><div class="t" style="left:369px;width:100px;text-align:right;top:396.15px;font-size:14px;line-height:16px;color:#333">$3251.25</div><div class="t" style="left:474px;width:100px;text-align:right;top:396.15px;font-size:14px;line-height:16px;color:#333">$3771.45</div><div class="t" style="left:585px;top:396.15px;font-size:14px;line-height:16px;color:#333">3C510511</div><div class="t" style="left:690px;top:396.15px;font-size:14px;line-height:16px;color:#333">ABC Stereo</div><div class="t" style="left:789px;width:100px;text-align:right;top:396.15px;font-size:14px;line-height:16px;color:#333">5</div><div class="t" style="left:1004px;top:396.15px;font-size:14px;line-height:16px;color:#333">Stock Item</div><div class="t" style="left:1319px;top:396.15px;font-size:14px;line-height:16px;color:#333">Y</div><div class="t" style="left:5px;top:426.15px;font-size:14px;line-height:16px;color:#333">PT61HX41</div><div class="t" style="left:109px;top:426.15px;font-size:14px;line-height:16px;color:#333">61" HDTV</div><div class="t" style="left:264px;width:100px;text-align:right;top:426.15px;font-size:14px;line-height:16px;color:#333">$2039.00</div><div class="t" style="left:369px;width:100px;text-align:right;top:426.15px;font-size:14px;line-height:16px;color:#333">$2548.75</div><div class="t" style="left:474px;width:100px;text-align:right;top:426.15px;font-size:14px;line-height:16px;color:#333">$2956.55</div><div class="t" style="left:585px;top:426.15px;font-size:14px;line-height:16px;color:#333">3C5415</div><div class="t" style="left:690px;top:426.15px;font-size:14px;line-height:16px;color:#333">ABC Stereo</div><div class="t" style="left:789px;width:100px;text-align:right;top:426.15px;font-size:14px;line-height:16px;color:#333">1</div><div class="t" style="left:1004px;top:426.15px;font-size:14px;line-height:16px;color:#333">Stock Item</div><div class="t" style="left:1319px;top:426.15px;font-size:14px;line-height:16px;color:#333">Y</div><div class="b" style="left:103px;top:0;width:1px;height:445px;background:#d6d6d6"></div><div class="b" style="left:264px;top:0;width:1px;height:445px;background:#d6d6d6"></div><div class="b" style="left:369px;top:0;width:1px;height:445px;background:#d6d6d6"></div><div class="b" style="left:474px;top:0;width:1px;height:445px;background:#d6d6d6"></div><div class="b" style="left:579px;top:0;width:1px;height:445px;background:#d6d6d6"></div><div class="b" style="left:684px;top:0;width:1px;height:445px;background:#d6d6d6"></div><div class="b" style="left:789px;top:0;width:1px;height:445px;background:#d6d6d6"></div><div class="b" style="left:894px;top:0;width:1px;height:445px;background:#d6d6d6"></div><div class="b" style="left:998px;top:0;width:1px;height:445px;background:#d6d6d6"></div><div class="b" style="left:1103px;top:0;width:1px;height:445px;background:#d6d6d6"></div><div class="b" style="left:1208px;top:0;width:1px;height:445px;background:#d6d6d6"></div><div class="b" style="left:1313px;top:0;width:1px;height:445px;background:#d6d6d6"></div></div><div class="t" style="left:302px;top:511.15px;width:92px;overflow:hidden;text-overflow:ellipsis;font-size:14px;line-height:16px;color:#333">Mfg. Part #</div><svg class="b" style="left:381px;top:516px" width="9" height="6" viewBox="0 0 9 6"><path d="M1 0.8L4.6 4.4L8.2 0.8" fill="none" stroke="#444" stroke-width="1.05"/></svg><div class="b" style="left:400px;top:505px;width:1px;height:31px;background:#d6d6d6"></div><div class="t" style="left:406px;top:511.15px;width:149px;overflow:hidden;text-overflow:ellipsis;font-size:14px;line-height:16px;color:#333">Description</div><svg class="b" style="left:542px;top:516px" width="9" height="6" viewBox="0 0 9 6"><path d="M1 0.8L4.6 4.4L8.2 0.8" fill="none" stroke="#444" stroke-width="1.05"/></svg><div class="b" style="left:561px;top:505px;width:1px;height:31px;background:#d6d6d6"></div><div class="t" style="left:567px;top:511.15px;width:93px;overflow:hidden;text-overflow:ellipsis;font-size:14px;line-height:16px;color:#333">Cost</div><svg class="b" style="left:647px;top:516px" width="9" height="6" viewBox="0 0 9 6"><path d="M1 0.8L4.6 4.4L8.2 0.8" fill="none" stroke="#444" stroke-width="1.05"/></svg><div class="b" style="left:666px;top:505px;width:1px;height:31px;background:#d6d6d6"></div><div class="t" style="left:672px;top:511.15px;width:93px;overflow:hidden;text-overflow:ellipsis;font-size:14px;line-height:16px;color:#333">Price</div><svg class="b" style="left:752px;top:516px" width="9" height="6" viewBox="0 0 9 6"><path d="M1 0.8L4.6 4.4L8.2 0.8" fill="none" stroke="#444" stroke-width="1.05"/></svg><div class="b" style="left:771px;top:505px;width:1px;height:31px;background:#d6d6d6"></div><div class="t" style="left:777px;top:511.15px;width:93px;overflow:hidden;text-overflow:ellipsis;font-size:14px;line-height:16px;color:#333">List</div><svg class="b" style="left:857px;top:516px" width="9" height="6" viewBox="0 0 9 6"><path d="M1 0.8L4.6 4.4L8.2 0.8" fill="none" stroke="#444" stroke-width="1.05"/></svg><div class="b" style="left:876px;top:505px;width:1px;height:31px;background:#d6d6d6"></div><div class="t" style="left:882px;top:511.15px;width:93px;overflow:hidden;text-overflow:ellipsis;font-size:14px;line-height:16px;color:#333">Vendor Part …</div><svg class="b" style="left:962px;top:516px" width="9" height="6" viewBox="0 0 9 6"><path d="M1 0.8L4.6 4.4L8.2 0.8" fill="none" stroke="#444" stroke-width="1.05"/></svg><div class="b" style="left:981px;top:505px;width:1px;height:31px;background:#d6d6d6"></div><div class="t" style="left:987px;top:511.15px;width:93px;overflow:hidden;text-overflow:ellipsis;font-size:14px;line-height:16px;color:#333">Manufacture…</div><svg class="b" style="left:1067px;top:516px" width="9" height="6" viewBox="0 0 9 6"><path d="M1 0.8L4.6 4.4L8.2 0.8" fill="none" stroke="#444" stroke-width="1.05"/></svg><div class="b" style="left:1086px;top:505px;width:1px;height:31px;background:#d6d6d6"></div><div class="t" style="left:1092px;top:511.15px;width:93px;overflow:hidden;text-overflow:ellipsis;font-size:14px;line-height:16px;color:#333">Availability</div><svg class="b" style="left:1172px;top:516px" width="9" height="6" viewBox="0 0 9 6"><path d="M1 0.8L4.6 4.4L8.2 0.8" fill="none" stroke="#444" stroke-width="1.05"/></svg><div class="b" style="left:1191px;top:505px;width:1px;height:31px;background:#d6d6d6"></div><div class="t" style="left:1197px;top:511.15px;width:92px;overflow:hidden;text-overflow:ellipsis;font-size:14px;line-height:16px;color:#333">Notes</div><svg class="b" style="left:1276px;top:516px" width="9" height="6" viewBox="0 0 9 6"><path d="M1 0.8L4.6 4.4L8.2 0.8" fill="none" stroke="#444" stroke-width="1.05"/></svg><div class="b" style="left:1295px;top:505px;width:1px;height:31px;background:#d6d6d6"></div><div class="t" style="left:1301px;top:511.15px;width:93px;overflow:hidden;text-overflow:ellipsis;font-size:14px;line-height:16px;color:#333">Category</div><svg class="b" style="left:1381px;top:516px" width="9" height="6" viewBox="0 0 9 6"><path d="M1 0.8L4.6 4.4L8.2 0.8" fill="none" stroke="#444" stroke-width="1.05"/></svg><div class="b" style="left:1400px;top:505px;width:1px;height:31px;background:#d6d6d6"></div><div class="t" style="left:1406px;top:511.15px;width:93px;overflow:hidden;text-overflow:ellipsis;font-size:14px;line-height:16px;color:#333">Price Modifi…</div><svg class="b" style="left:1486px;top:516px" width="9" height="6" viewBox="0 0 9 6"><path d="M1 0.8L4.6 4.4L8.2 0.8" fill="none" stroke="#444" stroke-width="1.05"/></svg><div class="b" style="left:1505px;top:505px;width:1px;height:31px;background:#d6d6d6"></div><div class="t" style="left:1511px;top:511.15px;width:93px;overflow:hidden;text-overflow:ellipsis;font-size:14px;line-height:16px;color:#333">Cost Modifie…</div><svg class="b" style="left:1591px;top:516px" width="9" height="6" viewBox="0 0 9 6"><path d="M1 0.8L4.6 4.4L8.2 0.8" fill="none" stroke="#444" stroke-width="1.05"/></svg><div class="b" style="left:1610px;top:505px;width:1px;height:31px;background:#d6d6d6"></div><div class="t" style="left:1616px;top:511.15px;font-size:14px;line-height:16px;color:#333">Tax Code</div><div class="b" style="left:1686px;top:505px;width:26px;height:32px;background:#f3f3f3;border-left:1px solid #d6d6d6;border-bottom:1px solid #cfcfcf;box-sizing:border-box"></div><svg class="b" style="left:1694px;top:515px" width="13" height="11" viewBox="0 0 13 11"><path d="M0 1.2H13M0 5.5H13M0 9.8H13" stroke="#222" stroke-width="1.8"/></svg><div class="b" style="left:1698px;top:536px;width:14px;height:445px;background:#c8c8c8"></div><div class="b" style="left:1699px;top:537px;width:12px;height:12px;background:#f7f7f7"></div><div class="b" style="left:1699px;top:551px;width:12px;height:256px;background:#f7f7f7"></div><div class="b" style="left:1699px;top:968px;width:12px;height:12px;background:#f7f7f7"></div><svg class="b" style="left:1701px;top:540px" width="9" height="5"><path d="M0 4.9L4.5 0L9 4.9Z" fill="#555"/></svg><svg class="b" style="left:1701px;top:971px" width="9" height="5"><path d="M0 0L4.5 5L9 0Z" fill="#555"/></svg><div class="b" style="left:297px;top:981px;width:1415px;height:15px;background:#c8c8c8"></div><div class="b" style="left:298px;top:982px;width:12px;height:12px;background:#f7f7f7"></div><div class="b" style="left:312px;top:982px;width:317px;height:12px;background:#f7f7f7"></div><div class="b" style="left:1685px;top:982px;width:12px;height:12px;background:#f7f7f7"></div><svg class="b" style="left:302px;top:984px" width="5" height="9"><path d="M5 0L0 4.5L5 9Z" fill="#666"/></svg><svg class="b" style="left:1689px;top:984px" width="5" height="9"><path d="M0 0L5 4.5L0 9Z" fill="#555"/></svg>
</body></html>
